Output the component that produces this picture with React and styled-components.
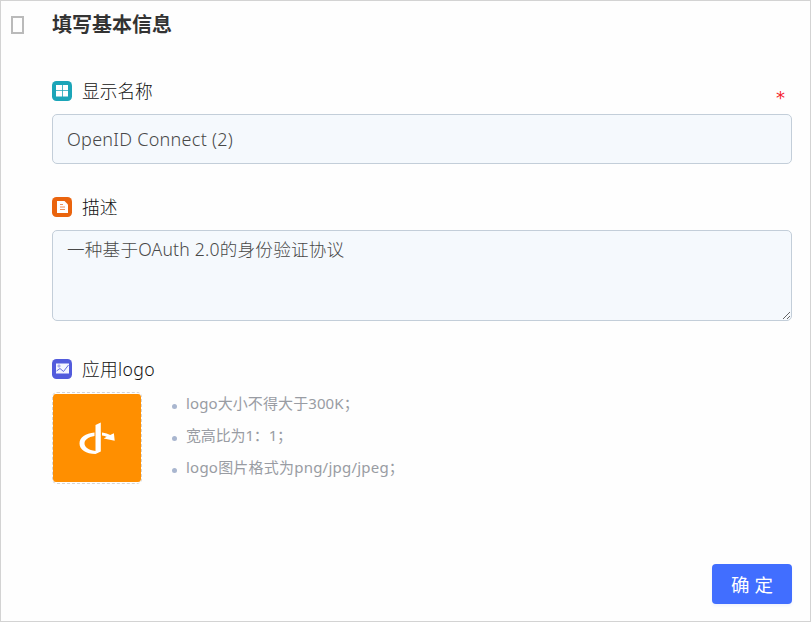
import React from "react";
import styled, { createGlobalStyle } from "styled-components";

const GlobalStyle = createGlobalStyle`
  * { box-sizing: border-box; }
  body {
    margin: 0;
    background: #fefefe;
    font-family: "Noto Sans", "Noto Sans CJK SC", sans-serif;
  }
`;

const Panel = styled.main`
  display: flex;
  flex-direction: column;
  width: 811px;
  height: 622px;
  padding: 0 18px 17px 10px;
  border: 1px solid #d3d3d3;
  overflow: hidden;
`;

const Header = styled.header`
  display: flex;
  align-items: center;
  height: 46px;
  flex: none;
`;

const BackGlyph = styled.span`
  width: 13px;
  height: 18px;
  margin: 2px 28px 0 0;
  border: 2px solid #bababa;
`;

const Title = styled.h1`
  margin: 2px 0 0;
  color: #333;
  font-size: 20px;
  line-height: 28px;
  font-weight: 700;
`;

const Form = styled.form`
  display: flex;
  flex-direction: column;
  flex: 1;
  padding-left: 41px;
`;

const Field = styled.section`
  display: flex;
  flex-direction: column;
  margin-top: ${(p) => p.$gap}px;
`;

const LabelRow = styled.div`
  display: flex;
  align-items: center;
  height: 24px;
  margin-bottom: 11px;
`;

const Label = styled.label`
  margin-left: 10px;
  color: #111;
  font-size: 17.7px;
  font-weight: 300;
  line-height: 24px;
  letter-spacing: ${(p) => p.$tracking || 0}px;
`;

const Required = styled.span`
  align-self: flex-end;
  margin: 0 7px -5px auto;
  color: #f5222d;
  font: 18px/20px "DejaVu Sans", sans-serif;
`;

const Input = styled.input`
  height: 50px;
  padding: 0 14px;
  border: 1px solid #c3ced9;
  border-radius: 5px;
  background: #f5f9fd;
  color: #484848;
  font: 300 18px "Noto Sans", "Noto Sans CJK SC", sans-serif;
  letter-spacing: 0.27px;
  outline: none;
`;

const Textarea = styled.textarea`
  display: block;
  height: 91px;
  padding: 6px 14px;
  border: 1px solid #c3ced9;
  border-radius: 5px;
  background: #f5f9fd;
  color: #484848;
  font: 300 17.6px/25px "Noto Sans", "Noto Sans CJK SC", sans-serif;
  letter-spacing: 0.2px;
  resize: vertical;
  outline: none;
`;

const Upload = styled.div`
  display: flex;
`;

const LogoBox = styled.div`
  display: flex;
  width: 90px;
  height: 92px;
  padding: 1px 0;
  border: 1px dashed #d5d5d5;
  border-radius: 5px;
  overflow: hidden;

  svg {
    width: 88px;
    height: 88px;
    border-radius: 3px;
    background: #ff8f00;
  }
`;

const Hints = styled.ul`
  margin: -5px 0 0 30px;
  padding: 0;
  list-style: none;
`;

const Hint = styled.li`
  display: flex;
  align-items: center;
  height: 32px;
  color: #999ca3;
  font-size: 15px;
  line-height: 32px;
  letter-spacing: ${(p) => p.$tracking || 0}px;

  &::before {
    content: "";
    width: 5px;
    height: 5px;
    margin: 7px 9px 0 0;
    border-radius: 50%;
    background: #a9b6cf;
  }
`;

const Footer = styled.footer`
  display: flex;
  justify-content: flex-end;
  margin-top: auto;
`;

const Submit = styled.button`
  width: 80px;
  height: 40px;
  padding: 0;
  border: 0;
  border-radius: 4px;
  background: #416eff;
  box-shadow: 0 2px 3px rgba(65, 110, 255, 0.08);
  color: #fff;
  font: 400 18.5px "Noto Sans", "Noto Sans CJK SC", sans-serif;
`;

const Icon = styled.svg`
  width: 20px;
  height: 20px;
  flex: none;
`;

function GridIcon() {
  return (
    <Icon viewBox="0 0 20 20">
      <rect width="20" height="20" rx="4.5" fill="#1ba5b8" />
      <path fill="#fff" d="M4 4h6v5.2H4zM10.8 4H16v5.2h-5.2zM4 10h6v5.4H4zM10.8 10H16v5.4h-5.2z" />
    </Icon>
  );
}

function DocumentIcon() {
  return (
    <Icon viewBox="0 0 20 20">
      <rect width="20" height="20" rx="4.5" fill="#ea640e" />
      <path fill="#fff" d="M5 4h7.5L16 7.5V16H5z" />
      <path stroke="#f0935c" d="M8 7.5h3M8 10h5M8 12.5h5" />
    </Icon>
  );
}

function ImageIcon() {
  return (
    <Icon viewBox="0 0 20 20">
      <rect width="20" height="20" rx="4.5" fill="#525bdc" />
      <rect x="4" y="4.5" width="13" height="10" fill="#f4f5ff" />
      <path fill="none" stroke="#626ae0" strokeWidth="1" d="m4.5 12 3.5-2.5 3.5 3 5-6.5" />
      <circle cx="7" cy="7" r="1.1" fill="none" stroke="#7b82e5" strokeWidth=".8" />
    </Icon>
  );
}

function OpenIdLogo() {
  return (
    <svg viewBox="0 0 88 88">
      <path
        fill="#fff"
        d="M42.5 31 47.8 28.5V57.5L42.5 60C33 60 26.5 55.7 26.5 49.5 26.5 43.5 32.5 39.3 41.5 38.6V42C35.5 43 31.5 45.5 31.5 49.5 31.5 53 35.5 56.3 42.5 57z"
      />
      <path fill="#fff" d="M49 38.6c3.6.4 6 1.3 8.2 2.5l3.7-1.8.8 7.5-11-2.3 3-1.7c-1.2-.6-2.7-1-4.7-1.3z" />
    </svg>
  );
}

export default function App() {
  return (
    <>
      <GlobalStyle />
      <Panel>
        <Header>
          <BackGlyph />
          <Title>填写基本信息</Title>
        </Header>
        <Form onSubmit={(e) => e.preventDefault()}>
          <Field $gap={32}>
            <LabelRow>
              <GridIcon />
              <Label htmlFor="name">显示名称</Label>
              <Required>*</Required>
            </LabelRow>
            <Input id="name" defaultValue="OpenID Connect (2)" />
          </Field>
          <Field $gap={31}>
            <LabelRow>
              <DocumentIcon />
              <Label htmlFor="description">描述</Label>
            </LabelRow>
            <Textarea id="description" defaultValue="一种基于OAuth 2.0的身份验证协议" />
          </Field>
          <Field $gap={36}>
            <LabelRow>
              <ImageIcon />
              <Label $tracking={0.35}>应用logo</Label>
            </LabelRow>
            <Upload>
              <LogoBox>
                <OpenIdLogo />
              </LogoBox>
              <Hints>
                <Hint $tracking={0.1}>logo大小不得大于300K；</Hint>
                <Hint $tracking={-0.15}>宽高比为1：1；</Hint>
                <Hint $tracking={0.22}>logo图片格式为png/jpg/jpeg；</Hint>
              </Hints>
            </Upload>
          </Field>
          <Footer>
            <Submit type="submit">确 定</Submit>
          </Footer>
        </Form>
      </Panel>
    </>
  );
}
